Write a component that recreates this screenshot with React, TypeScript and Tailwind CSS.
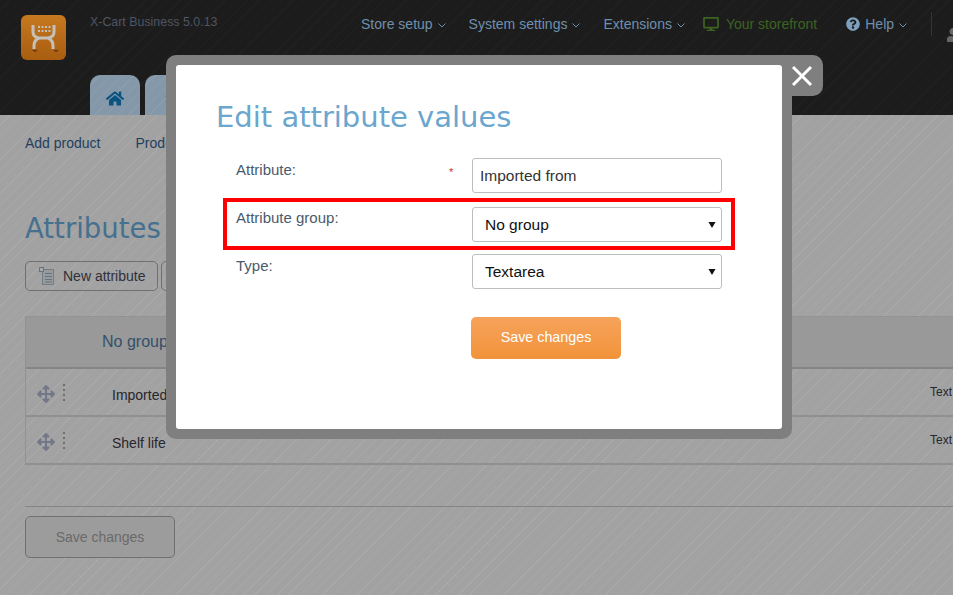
import React from 'react'
import { FaHome, FaQuestionCircle, FaDesktop, FaArrowsAlt, FaUser, FaCog } from 'react-icons/fa'

function Chevron({ className }: { className?: string }) {
    return (
        <svg width="8" height="5" viewBox="0 0 8 5" fill="none" className={className}>
            <path d="M0.5 0.5 L4 4 L7.5 0.5" stroke="currentColor" strokeWidth="1" />
        </svg>
    )
}

function NavItem({ label, className }: { label: string; className: string }) {
    return (
        <span className={`flex items-center gap-[5px] text-[14px] text-[#6f90ad] ${className}`}>
            {label}
            <Chevron className="mt-[3px] text-[#6f90ad]" />
        </span>
    )
}

function Logo() {
    return (
        <div className="h-[45px] w-[45px] shrink-0 rounded-[6px] bg-gradient-to-b from-[#c7791f] to-[#a85d10]">
            <svg width="45" height="45" viewBox="0 0 45 45" fill="none">
                {/* cart body */}
                <path d="M12 10 V17 Q12 22 18 23 H27 Q33 22 33 17 V10" stroke="#c4c0ba" strokeWidth="3" />
                <path d="M13 34 V31 Q13 25 18 23 M32 34 V31 Q32 25 27 23" stroke="#c4c0ba" strokeWidth="3" />
                <path d="M17 11 h2 v2 h-2z M20.5 11 h2 v2 h-2z M24 11 h2 v2 h-2z M27.5 11 h2 v2 h-2z M17 15 h2 v2 h-2z M20.5 15 h2 v2 h-2z M24 15 h2 v2 h-2z M27.5 15 h2 v2 h-2z" fill="#c4c0ba" />
                <path d="M12 35 q2 2 4 0 M33 35 q2 2 4 0" stroke="#6b3a10" strokeWidth="1.5" />
            </svg>
        </div>
    )
}

function ListIcon() {
    return (
        <svg width="15" height="18" viewBox="0 0 15 18" fill="none">
            <rect x="3.5" y="2.5" width="11" height="15" fill="#9a9a9a" stroke="#6f7f8a" />
            <rect x="0.5" y="0.5" width="4" height="4" fill="#a8a8a8" stroke="#5d7587" />
            <path d="M6 6.5 H13 M6 9.5 H13 M6 12.5 H13 M6 15 H13" stroke="#5d7587" />
        </svg>
    )
}

function AttributeRow({ name }: { name: string }) {
    return (
        <div className="flex h-[48px] items-center border-b-2 border-[#8f8f8f] pl-[11px] whitespace-nowrap">
            <FaArrowsAlt className="mt-[4px] h-[18px] w-[18px] shrink-0 text-[#73778a]" />
            <div className="ml-[8px] flex shrink-0 flex-col gap-[3px]">
                <div className="h-[2px] w-[2px] bg-[#6e6e6e]" />
                <div className="h-[2px] w-[2px] bg-[#6e6e6e]" />
                <div className="h-[2px] w-[2px] bg-[#6e6e6e]" />
                <div className="h-[2px] w-[2px] bg-[#6e6e6e]" />
            </div>
            <span className="ml-[47px] mt-[6px] w-[818px] shrink-0 text-[14px] text-[#26262c]">{name}</span>
            <span className="text-[12px] text-[#26262c]">Text</span>
        </div>
    )
}

function FieldSelect({ value }: { value: string }) {
    return (
        <div className="relative h-[35px] w-[250px]">
            <select
                defaultValue={value}
                className="h-full w-full appearance-none rounded-[3px] border border-[#bdbdbd] bg-white pl-[12px] text-[15.5px] text-[#111]"
            >
                <option>{value}</option>
            </select>
            <svg width="8" height="6" viewBox="0 0 8 6" className="pointer-events-none absolute right-[6px] top-[15px]">
                <path d="M0.5 0 H7.5 L4 6 Z" fill="#111" />
            </svg>
        </div>
    )
}

export default function App() {
    return (
        <div className="relative h-[595px] w-[953px] overflow-hidden font-['Liberation_Sans',Arial,sans-serif]">
            {/* Header */}
            <div className="flex h-[115px] bg-[#1c1c1c] bg-[repeating-linear-gradient(135deg,#1c1c1c_0px,#1c1c1c_7px,#202020_7px,#202020_8px)] pl-[21px]">
                <div className="pt-[15px]">
                    <Logo />
                </div>
                <div className="ml-[24px] flex w-[271px] shrink-0 flex-col">
                    <span className="mt-[13px] text-[12.4px] text-[#4f5561]">X-Cart Business 5.0.13</span>
                    <div className="mt-auto flex gap-[5px]">
                        <div className="flex h-[40px] w-[50px] items-center justify-center rounded-t-[10px] bg-[repeating-linear-gradient(135deg,#8498a9_0px,#8498a9_7px,#8b9eae_7px,#8b9eae_8px)] pt-[7px]">
                            <FaHome className="h-[17px] w-[18px] text-[#0a5280]" />
                        </div>
                        <div className="flex h-[40px] w-[50px] items-center rounded-t-[10px] bg-[repeating-linear-gradient(135deg,#8498a9_0px,#8498a9_7px,#8b9eae_7px,#8b9eae_8px)] pl-[20px] pt-[7px]">
                            <FaCog className="h-[18px] w-[18px] text-[#4a3f70]" />
                        </div>
                    </div>
                </div>
                <div className="flex h-[48px] shrink-0 items-center">
                    <NavItem label="Store setup" className="" />
                    <NavItem label="System settings" className="ml-[23px]" />
                    <NavItem label="Extensions" className="ml-[23px]" />
                    <FaDesktop className="ml-[18px] h-[14px] w-[16px] text-[#3d6322]" />
                    <span className="ml-[7px] text-[14px] text-[#3d6322]">Your storefront</span>
                    <FaQuestionCircle className="ml-[29px] h-[14px] w-[14px] text-[#7fa0bd]" />
                    <NavItem label="Help" className="ml-[5px]" />
                    <div className="ml-[24px] h-[24px] border-l border-[#2f3540]" />
                    <FaUser className="ml-[14px] mt-[22px] h-[14px] w-[14px] shrink-0 text-[#666]" />
                </div>
            </div>

            {/* Page body */}
            <div className="relative h-[480px] bg-[#a2a2a2] bg-[repeating-linear-gradient(135deg,#a2a2a2_0px,#a2a2a2_7px,#a8a8a8_7px,#a8a8a8_8px)] pl-[25px]">
                <div className="flex pt-[18px] text-[14px] text-[#1f3f5f]">
                    <span>Add product</span>
                    <span className="ml-[35px]">Product classes</span>
                </div>
                <h1 className="mt-[56px] font-['DejaVu_Sans',sans-serif] text-[27.5px] leading-[36px] text-[#45708f]">Attributes</h1>
                <div className="mt-[15px] flex gap-[3px]">
                    <div className="flex h-[30px] w-[133px] items-center rounded-[5px] border border-[#707070] pl-[13px] text-[14px] text-[#30303a]">
                        <ListIcon />
                        <span className="ml-[9px]">New attribute</span>
                    </div>
                    <div className="h-[30px] w-[100px] rounded-[5px] border border-[#707070]" />
                </div>
                <div className="mt-[25px] border-l border-[#929292]">
                    <div className="flex h-[53px] items-center border-t border-b-2 border-t-[#939393] border-b-[#858585] bg-[#999] pl-[76px] text-[16px] text-[#34506b]">
                        No group
                    </div>
                    <AttributeRow name="Imported from" />
                    <AttributeRow name="Shelf life" />
                </div>
                <div className="mt-[41px] border-t border-[#858585] pt-[9px]">
                    <div className="flex h-[42px] w-[150px] items-center justify-center rounded-[5px] border border-[#707070] bg-[#9c9c9c] text-[14px] text-[#6a6a6a]">
                        Save changes
                    </div>
                </div>
            </div>

            {/* Modal */}
            <div className="absolute left-[166px] top-[55px] h-[384px] w-[626px] rounded-[10px] bg-[#7f7f7f] p-[10px]">
                <div className="absolute left-[610px] top-0 flex h-[41px] w-[47px] items-center justify-center rounded-r-[10px] bg-[#7f7f7f] pl-[4px]">
                    <svg width="22" height="22" viewBox="0 0 22 22">
                        <path d="M2 2 L20 20 M20 2 L2 20" stroke="#fff" strokeWidth="3" />
                    </svg>
                </div>
                <div className="relative h-[364px] w-[606px] rounded-[3px] bg-white pl-[41px]">
                    <h2 className="-ml-[1px] pt-[33px] font-['DejaVu_Sans',sans-serif] text-[29px] leading-[38px] text-[#6ba6cf]">Edit attribute values</h2>
                    <div className="mt-[22px] flex h-[35px] pl-[19px]">
                        <span className="w-[213px] pt-[1px] text-[15px] text-[#4a5a6a]">Attribute:</span>
                        <span className="w-[23px] pt-[6px] text-[11px] text-[#c33]">*</span>
                        <div className="flex h-[35px] w-[250px] items-center rounded-[3px] border border-[#bdbdbd] pl-[7px] text-[15.5px] text-[#333]">
                            Imported from
                        </div>
                    </div>
                    <div className="ml-[6px] mt-[5px] flex h-[52px] w-[512px] items-start border-4 border-[#ff0000] pl-[9px]">
                        <span className="w-[236px] pt-[5px] text-[15px] text-[#4a5a6a]">Attribute group:</span>
                        <div className="pt-[5px]">
                            <FieldSelect value="No group" />
                        </div>
                    </div>
                    <div className="mt-[4px] flex pl-[19px]">
                        <span className="w-[236px] pt-[1px] text-[15px] text-[#4a5a6a]">Type:</span>
                        <FieldSelect value="Textarea" />
                    </div>
                    <div className="ml-[254px] mt-[28px] flex h-[42px] w-[150px] items-center justify-center rounded-[5px] bg-gradient-to-b from-[#f6a35a] to-[#f29339] text-[14.3px] text-white">
                        Save changes
                    </div>
                </div>
            </div>
        </div>
    )
}
